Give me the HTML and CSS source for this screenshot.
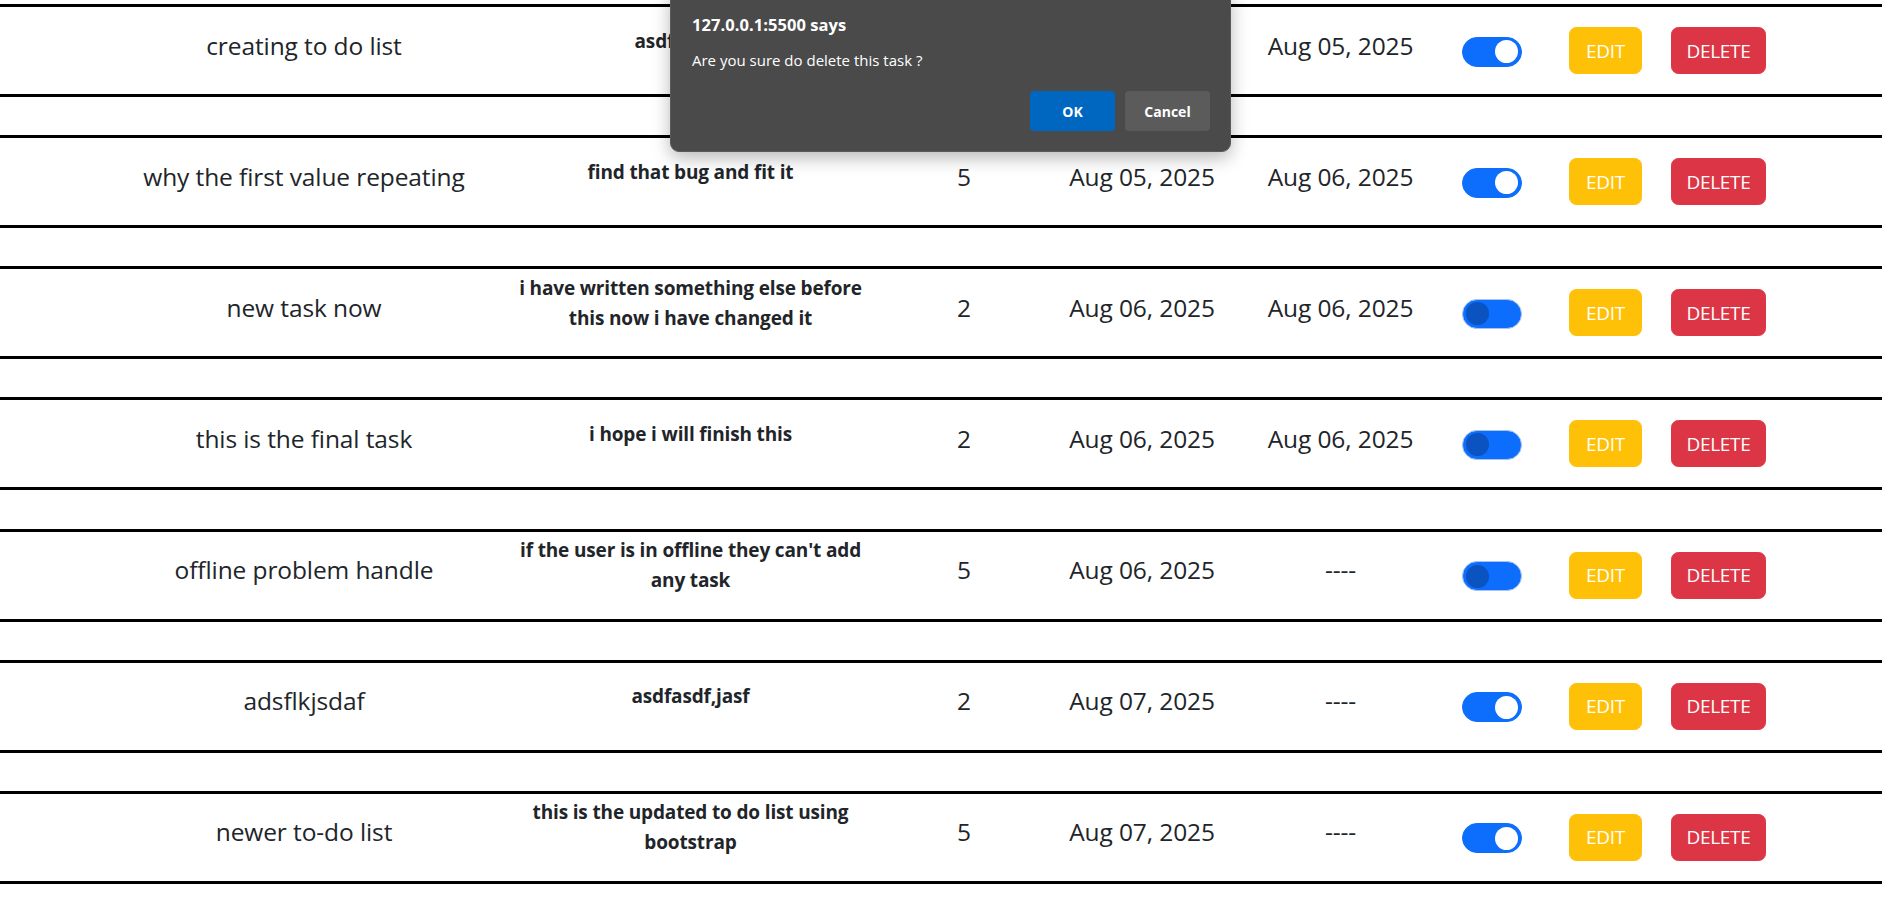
FILE: index.html
```html
<!DOCTYPE html>
<html lang="en">
<head>
<meta charset="utf-8">
<title>To-do list</title>
<link rel="stylesheet" href="styles.css">
</head>
<body>
<div class="list">
  <div class="row">
    <h5 class="cell title">creating to do list</h5>
    <p class="cell desc">asdfasdfasd</p>
    <h5 class="cell prio">3</h5>
    <h5 class="cell date">Aug 05, 2025</h5>
    <h5 class="cell date2">Aug 05, 2025</h5>
    <div class="cell sw"><span class="switch on"></span></div>
    <div class="cell actions"><button class="btn edit">EDIT</button><button class="btn del">DELETE</button></div>
  </div>
  <div class="row">
    <h5 class="cell title">why the first value repeating</h5>
    <p class="cell desc">find that bug and fit it</p>
    <h5 class="cell prio">5</h5>
    <h5 class="cell date">Aug 05, 2025</h5>
    <h5 class="cell date2">Aug 06, 2025</h5>
    <div class="cell sw"><span class="switch on"></span></div>
    <div class="cell actions"><button class="btn edit">EDIT</button><button class="btn del">DELETE</button></div>
  </div>
  <div class="row">
    <h5 class="cell title">new task now</h5>
    <p class="cell desc">i have written something else before this now i have changed it</p>
    <h5 class="cell prio">2</h5>
    <h5 class="cell date">Aug 06, 2025</h5>
    <h5 class="cell date2">Aug 06, 2025</h5>
    <div class="cell sw"><span class="switch"></span></div>
    <div class="cell actions"><button class="btn edit">EDIT</button><button class="btn del">DELETE</button></div>
  </div>
  <div class="row">
    <h5 class="cell title">this is the final task</h5>
    <p class="cell desc">i hope i will finish this</p>
    <h5 class="cell prio">2</h5>
    <h5 class="cell date">Aug 06, 2025</h5>
    <h5 class="cell date2">Aug 06, 2025</h5>
    <div class="cell sw"><span class="switch"></span></div>
    <div class="cell actions"><button class="btn edit">EDIT</button><button class="btn del">DELETE</button></div>
  </div>
  <div class="row">
    <h5 class="cell title">offline problem handle</h5>
    <p class="cell desc">if the user is in offline they can't add any task</p>
    <h5 class="cell prio">5</h5>
    <h5 class="cell date">Aug 06, 2025</h5>
    <h5 class="cell date2">----</h5>
    <div class="cell sw"><span class="switch"></span></div>
    <div class="cell actions"><button class="btn edit">EDIT</button><button class="btn del">DELETE</button></div>
  </div>
  <div class="row">
    <h5 class="cell title">adsflkjsdaf</h5>
    <p class="cell desc">asdfasdf,jasf</p>
    <h5 class="cell prio">2</h5>
    <h5 class="cell date">Aug 07, 2025</h5>
    <h5 class="cell date2">----</h5>
    <div class="cell sw"><span class="switch on"></span></div>
    <div class="cell actions"><button class="btn edit">EDIT</button><button class="btn del">DELETE</button></div>
  </div>
  <div class="row">
    <h5 class="cell title">newer to-do list</h5>
    <p class="cell desc">this is the updated to do list using bootstrap</p>
    <h5 class="cell prio">5</h5>
    <h5 class="cell date">Aug 07, 2025</h5>
    <h5 class="cell date2">----</h5>
    <div class="cell sw"><span class="switch on"></span></div>
    <div class="cell actions"><button class="btn edit">EDIT</button><button class="btn del">DELETE</button></div>
  </div>
</div>

<div class="dialog" role="alertdialog">
  <div class="dlg-title">127.0.0.1:5500 says</div>
  <div class="dlg-msg">Are you sure do delete this task ?</div>
  <div class="dlg-buttons">
    <button class="dlg-btn ok">OK</button>
    <button class="dlg-btn cancel">Cancel</button>
  </div>
</div>
</body>
</html>
```

FILE: styles.css
```css
* { box-sizing: border-box; }
html, body { margin: 0; padding: 0; background: #fff; }
body {
  font-family: "Open Sans", "Noto Sans", sans-serif;
  color: #212529;
  font-size: 20px;
  line-height: 1.5;
}
.list {
  padding-top: 4px;
  display: flex;
  flex-direction: column;
  gap: 38.17px;
}
.row {
  display: grid;
  grid-template-columns: 422px 351px 196px 160px 237px 110px 1fr;
  align-items: center;
  height: 93px;
  padding-left: 93px;
  border-top: 3px solid #000;
  border-bottom: 3px solid #000;
}
.cell { margin: 0; text-align: center; }
h5.cell {
  font-size: 24.5px;
  letter-spacing: -0.1px;
  font-weight: 400;
  line-height: 30px;
  margin-bottom: 10px;
}
p.desc {
  font-size: 19px;
  letter-spacing: -0.15px;
  font-weight: 700;
  line-height: 30px;
  margin-bottom: 20px;
}
.sw { text-align: left; padding-left: 3px; display: flex; align-items: center; padding-top: 2px; }
.switch {
  display: inline-block;
  position: relative;
  width: 60px;
  height: 30px;
  border-radius: 15px;
  background: #0d6efd;
  border: 1px solid #0d6efd;
}
.switch::after {
  content: "";
  position: absolute;
  top: 2.5px;
  left: 3px;
  width: 23px;
  height: 23px;
  border-radius: 50%;
  background: #0a53c1;
}
.switch:not(.on) { border-color: #a9c4ec; }
.switch.on::after { left: auto; right: 3px; background: #fff; }
.actions { display: flex; align-items: center; gap: 29px; text-align: left; }
.btn {
  font-family: inherit;
  font-size: 19px;
  letter-spacing: -0.3px;
  line-height: 30px;
  height: 47px;
  padding: 0;
  text-align: center;
  border: 1px solid transparent;
  border-radius: 7.5px;
  color: #fff;
  cursor: pointer;
}
.edit { width: 73px; background: #ffc107; border-color: #ffc107; }
.del { width: 95px; background: #dc3545; border-color: #dc3545; }

.dialog {
  position: absolute;
  left: 670px;
  top: -12px;
  width: 561px;
  padding: 24px 20px 20px 21px;
  background: #4a4a4a;
  border: 1px solid #5a5a5a;
  border-radius: 9px;
  box-shadow: 0 6px 18px rgba(0,0,0,0.28);
  color: #fff;
}
.dlg-title { font-weight: 700; font-size: 16.5px; line-height: 24px; letter-spacing: 0.05px; }
.dlg-msg { font-size: 15px; line-height: 22px; margin-top: 12px; }
.dlg-buttons { display: flex; justify-content: flex-end; gap: 10px; margin-top: 20px; }
.dlg-btn {
  width: 85px;
  height: 40px;
  border: none;
  border-radius: 4px;
  color: #fff;
  font-family: inherit;
  font-weight: 700;
  font-size: 14px;
}
.ok { background: #0067c0; }
.cancel { background: #5b5b5b; }
```
